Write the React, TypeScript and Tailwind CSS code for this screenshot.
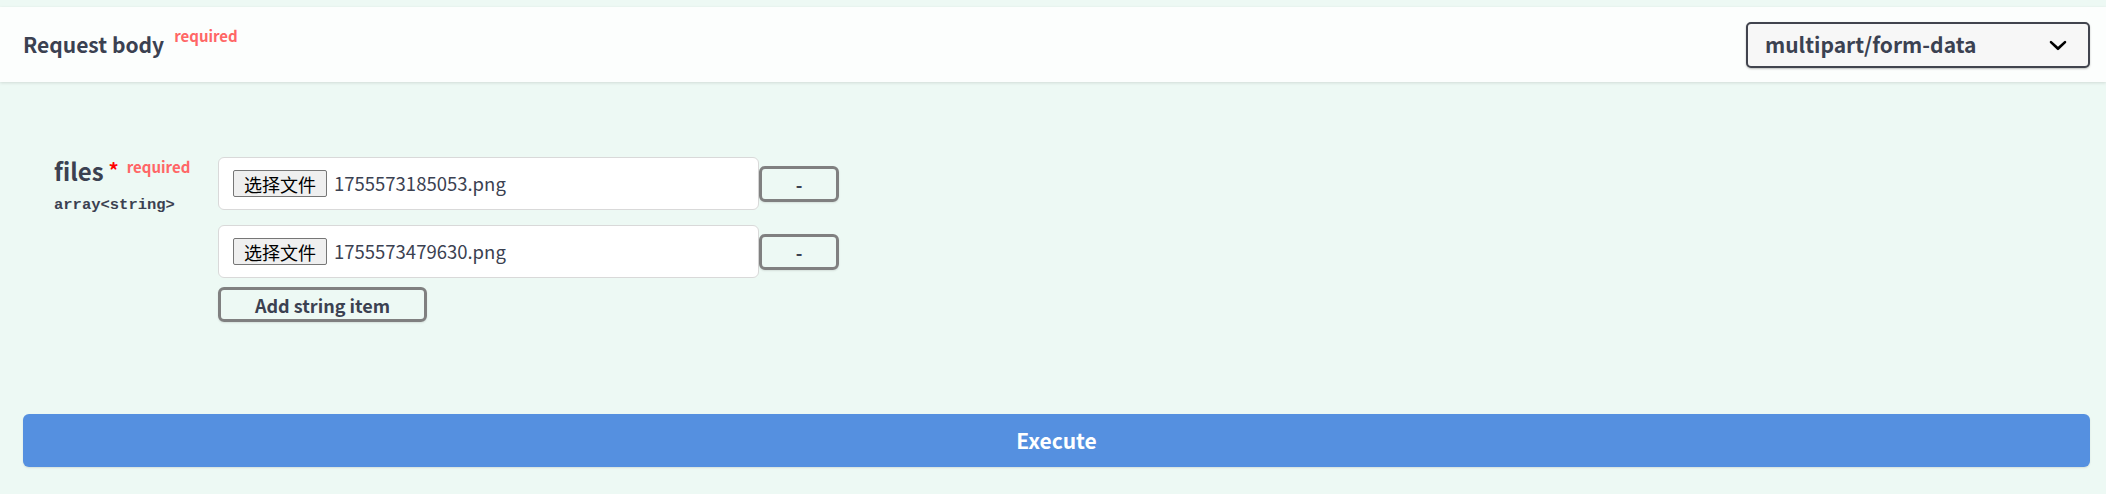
import React from "react";

const FileRow = ({ name }: { name: string }) => (
  <div className="flex items-center">
    <div className="w-[541px] h-[53px] bg-white border border-[#d9d9d9] rounded-[6px] flex items-center pl-[14px]">
      <span className="h-[27px] px-[10px] flex items-center bg-[#efefef] border border-[#767676] rounded-[2px] text-[18px] leading-none text-black">
        选择文件
      </span>
      <span className="ml-[7px] text-[18.5px] text-[#3b4151] leading-none">{name}</span>
    </div>
    <button className="w-[80px] h-[36px] border-[3px] border-[#808080] rounded-[6px] shadow-[0_1px_2px_rgba(0,0,0,0.1)] text-[18px] font-bold text-[#3b4151] flex items-center justify-center leading-none">
      -
    </button>
  </div>
);

export default function App() {
  return (
    <div className="w-[2106px] h-[494px] bg-[#edf9f4] pt-[7px] font-['Noto_Sans_CJK_SC','Noto_Sans',sans-serif] text-[#3b4151] overflow-hidden">
      <div className="h-[75px] bg-[#fcfefd] shadow-[0_1px_3px_rgba(0,0,0,0.12)] flex items-center justify-between pl-[23px] pr-[16px]">
        <h4 className="flex items-start text-[21px] font-bold leading-none">
          <span>Request body</span>
          <span className="ml-[10px] -mt-[6px] text-[15px] font-bold text-[#ff6666]">required</span>
        </h4>
        <div className="w-[344px] h-[46px] border-2 border-[#41444e] rounded-[5px] bg-[#f7f7f7] shadow-[0_1px_2px_rgba(0,0,0,0.25)] flex items-center justify-between pl-[17px] pr-[12px]">
          <span className="text-[21px] font-bold leading-none">multipart/form-data</span>
          <svg width="36" height="36" viewBox="0 0 20 20">
            <path
              fill="#000"
              d="M13.418 7.859a.695.695 0 01.978 0 .68.68 0 010 .969l-3.908 3.83a.697.697 0 01-.979 0l-3.908-3.83a.68.68 0 010-.969.695.695 0 01.978 0L10 11z"
            />
          </svg>
        </div>
      </div>

      <div className="flex pl-[54px] pt-[75px]">
        <div className="w-[164px] pt-[2px]">
          <div className="flex items-start">
            <span className="text-[24px] font-bold leading-[24px]">files</span>
            <span className="ml-[5px] mt-[1px] text-[20px] font-bold text-[#ff0000] leading-none">*</span>
            <span className="ml-[8px] text-[15px] font-bold text-[#ff6666] leading-none">required</span>
          </div>
          <div className="mt-[15px] font-['Liberation_Mono',monospace] text-[15.5px] font-bold leading-none text-[#3b4151]">
            array&lt;string&gt;
          </div>
        </div>
        <div className="flex flex-col">
          <FileRow name="1755573185053.png" />
          <div className="mt-[15px]">
            <FileRow name="1755573479630.png" />
          </div>
          <button className="mt-[9px] w-[209px] h-[35px] border-[3px] border-[#808080] rounded-[6px] shadow-[0_1px_2px_rgba(0,0,0,0.1)] text-[18px] font-bold text-[#3b4151] flex items-center justify-center leading-none">
            Add string item
          </button>
        </div>
      </div>

      <div className="mt-[92px] ml-[23px] mr-[16px] h-[53px] bg-[#5590e0] rounded-[6px] shadow-[0_1px_2px_rgba(0,0,0,0.1)] flex items-center justify-center text-white text-[21px] font-bold">
        Execute
      </div>
    </div>
  );
}
